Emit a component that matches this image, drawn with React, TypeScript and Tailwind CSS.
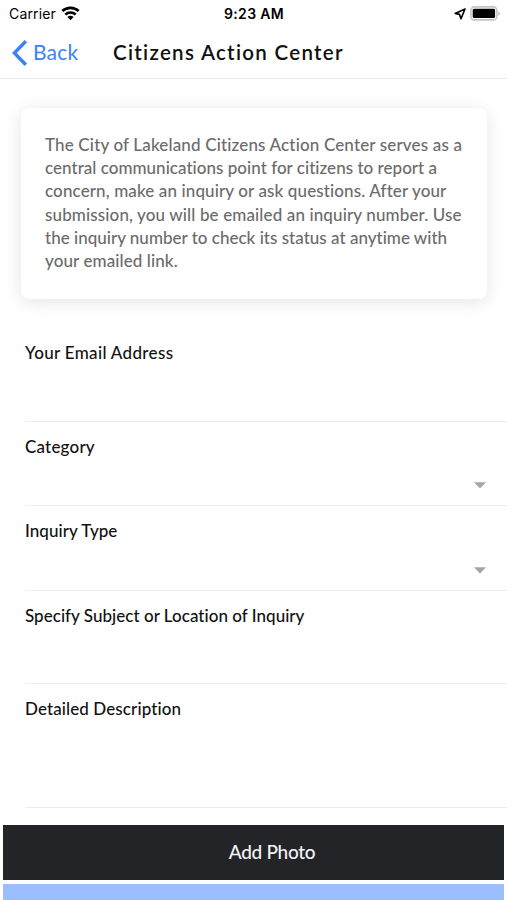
import React from 'react';

const introLines = [
  { text: 'The City of Lakeland Citizens Action Center serves as a', tracking: 'tracking-[0.155px]' },
  { text: 'central communications point for citizens to report a', tracking: 'tracking-[0.03px]' },
  { text: 'concern, make an inquiry or ask questions. After your', tracking: 'tracking-[0.12px]' },
  { text: 'submission, you will be emailed an inquiry number. Use', tracking: 'tracking-[0.13px]' },
  { text: 'the inquiry number to check its status at anytime with', tracking: 'tracking-[0.01px]' },
  { text: 'your emailed link.', tracking: 'tracking-[0.1px]' },
];

const fields = [
  { label: 'Your Email Address', height: 'h-[94px]', tracking: 'tracking-[0.33px]', select: false },
  { label: 'Category', height: 'h-[84px]', tracking: 'tracking-[0.2px]', select: true },
  { label: 'Inquiry Type', height: 'h-[85px]', tracking: 'tracking-[0.05px]', select: true },
  { label: 'Specify Subject or Location of Inquiry', height: 'h-[93px]', tracking: 'tracking-[0.03px]', select: false },
  { label: 'Detailed Description', height: 'h-[124px]', tracking: 'tracking-[0.1px]', select: false },
];

const StatusBar = () => (
  <div className="grid h-7 grid-cols-3 items-center pl-[9px] pr-[7px] font-['Inter',sans-serif] text-black">
    <div className="flex items-center gap-[5px]">
      <span className="text-[14px] leading-7 tracking-[0.15px]">Carrier</span>
      <svg className="mb-[2px]" width="19" height="15" viewBox="0 0 19 15" fill="none" stroke="currentColor" strokeWidth="2.7">
        <path d="M1.3 5.1C5.9.8 13.1.8 17.7 5.1" />
        <path d="M4.3 8.5c3-2.7 7.4-2.7 10.4 0" />
        <path d="M9.5 14.2 6.4 11c1.8-1.6 4.4-1.6 6.2 0z" fill="currentColor" stroke="none" />
      </svg>
    </div>
    <span className="-ml-px text-center text-[14px] font-semibold leading-7 tracking-[0.3px]">9:23 AM</span>
    <div className="flex items-center justify-end gap-[4px]">
      <svg className="mb-px" width="12" height="12" viewBox="0 0 12 12" fill="none" stroke="currentColor" strokeWidth="1.6" strokeLinejoin="round">
        <path d="M11 1 1.2 5.4l4.3 1L7 10.8z" />
      </svg>
      <svg className="mb-[2px]" width="30" height="15" viewBox="0 0 30 15">
        <rect x=".9" y=".9" width="26" height="13" rx="3.5" fill="white" stroke="#c4c4c4" strokeWidth="1.6" />
        <rect x="2.7" y="2.7" width="22.4" height="9.4" rx="1.4" fill="black" />
        <path d="M28.3 5.2c2 .8 2 3.8 0 4.6z" fill="#b5b5b5" />
      </svg>
    </div>
  </div>
);

const App = () => {
  return (
    <div className="flex h-[900px] w-[507px] flex-col overflow-hidden bg-white font-['Lato',sans-serif]">
      <StatusBar />

      <header className="flex h-[51px] items-center border-b border-[#ebebeb] pb-px pl-3">
        <button className="flex items-center gap-[6px] text-[#3b82f7]">
          <svg width="15" height="26" viewBox="0 0 15 26" fill="none" stroke="currentColor" strokeWidth="3.4">
            <path d="M13.8 1.2 2.4 13l11.4 11.8" />
          </svg>
          <span className="w-20 pb-px text-left text-[21px] leading-6 tracking-[0.2px]">Back</span>
        </button>
        <h1 className="whitespace-nowrap pb-px text-[20.5px] font-semibold leading-6 tracking-[1.3px] text-[#111]">Citizens Action Center</h1>
      </header>

      <section className="ml-[21px] mt-[29px] h-[191px] w-[466px] shrink-0 rounded-[8px] bg-white px-6 pt-[25px] shadow-[0_3px_18px_rgba(0,0,0,0.11)]">
        <p className="text-[17px] font-medium leading-[23.2px] text-[#6b6b6b]">
          {introLines.map((line) => (
            <span key={line.text} className="block whitespace-nowrap">
              <span className={line.tracking}>{line.text}</span>
            </span>
          ))}
        </p>
      </section>

      <form className="mt-[29px] shrink-0 pl-[25px]">
        {fields.map((field) => (
          <div key={field.label} className={`${field.height} flex flex-col justify-between border-b border-[#ededed] pt-[13px]`}>
            <label className={`${field.tracking} whitespace-nowrap text-[17px] font-medium leading-6 text-[#111]`}>
              <span>{field.label}</span>
            </label>
            {field.select && (
              <svg className="mb-[16px] mr-[21px] self-end" width="12" height="7" viewBox="0 0 12 7" fill="#a6a6a6">
                <path d="M0 .3h12L6 6.5z" />
              </svg>
            )}
          </div>
        ))}
      </form>

      <div className="mt-[17px] flex shrink-0 flex-col gap-1 pl-[3px] pr-[3px]">
        <button className="h-[55px] bg-[#222428] pb-[2px] pl-[37px] text-[19px] font-medium leading-6 tracking-[-0.3px] text-[#f2f2f2]">
          Add Photo
        </button>
        <div className="h-4 bg-[#9bbeff]" />
      </div>
    </div>
  );
};

export default App;
